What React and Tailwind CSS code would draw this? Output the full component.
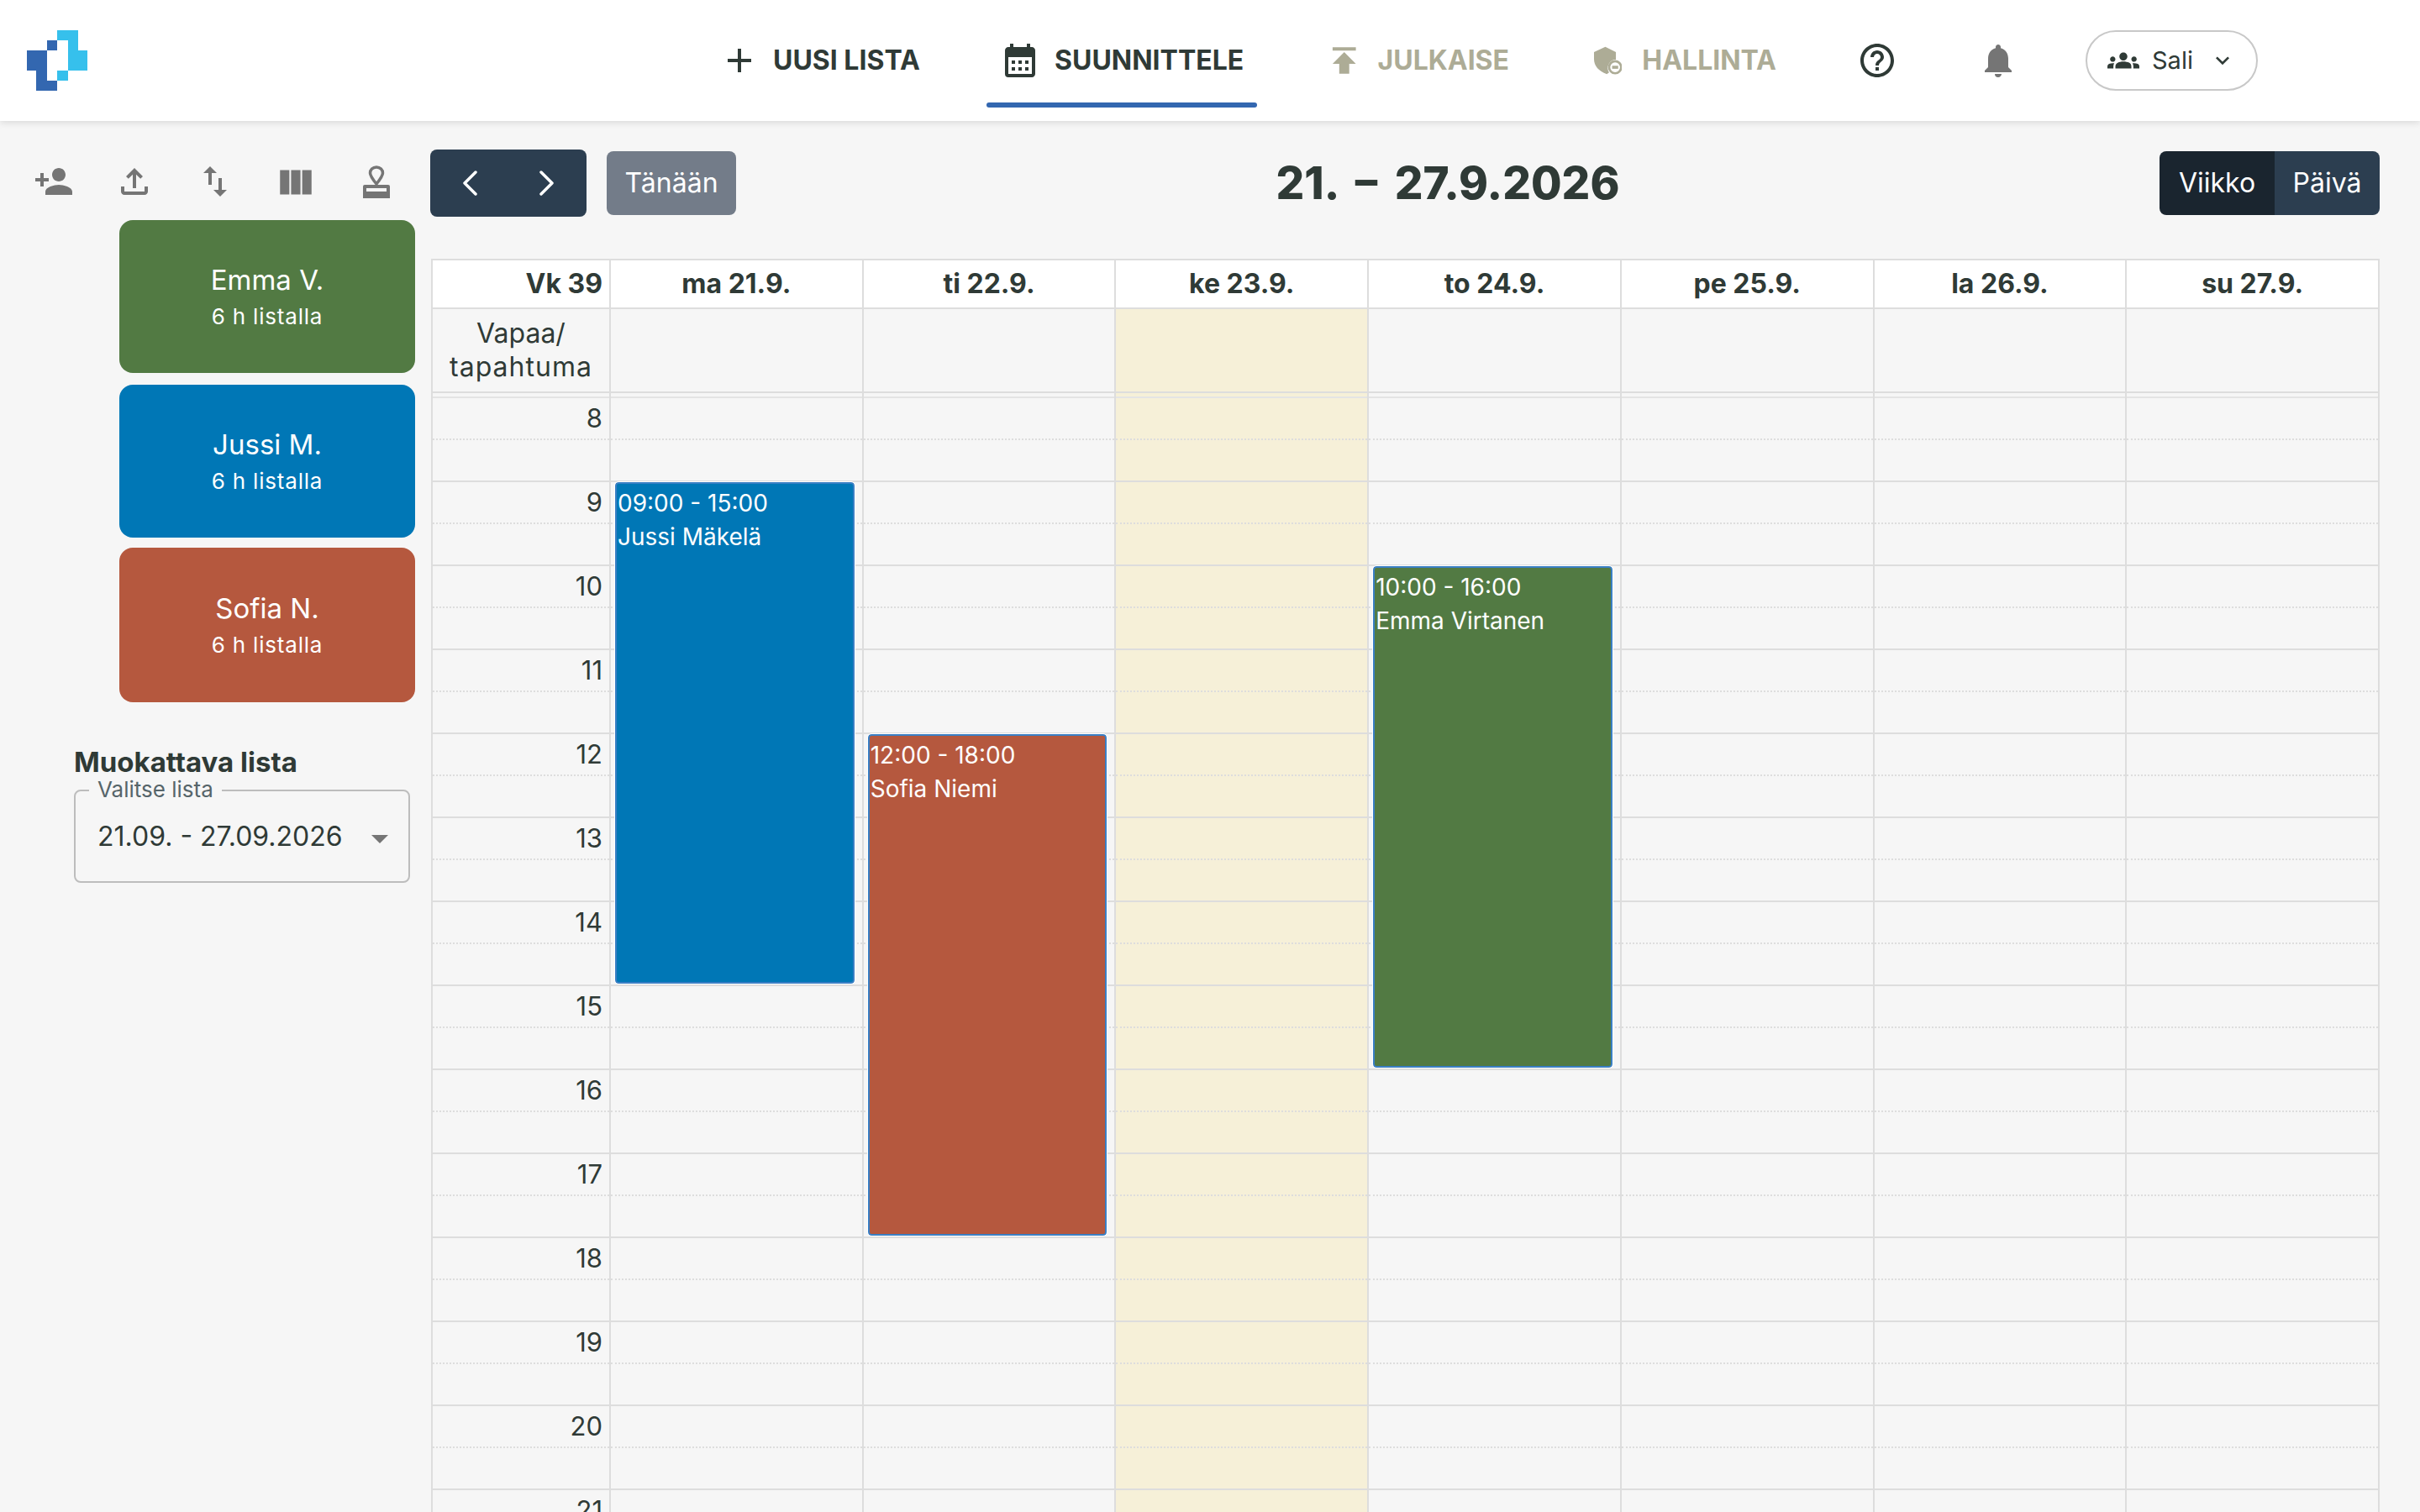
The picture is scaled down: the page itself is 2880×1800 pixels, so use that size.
import {
  MdAdd,
  MdArrowDropDown,
  MdCalendarMonth,
  MdGroups,
  MdHelpOutline,
  MdKeyboardArrowDown,
  MdNotifications,
  MdOutlineFileUpload,
  MdPersonAdd,
  MdPublish,
  MdSwapVert,
  MdViewColumn,
} from "react-icons/md";

const paivat = ["ma 21.9.", "ti 22.9.", "ke 23.9.", "to 24.9.", "pe 25.9.", "la 26.9.", "su 27.9."];
const tunnit = [8, 9, 10, 11, 12, 13, 14, 15, 16, 17, 18, 19, 20, 21];

function Logo() {
  return (
    <svg width="72" height="72" viewBox="0 0 72 72" className="block">
      <path fill="#3367b0" d="M24 12h12v12H24zM0 24h24v24H0zM11 48h13v12h12v12H11z" />
      <path fill="#36c0ec" d="M36 0h25v24h11v24H49V12H36zM36 48h13v12H36z" />
    </svg>
  );
}

function Leima() {
  return (
    <svg width="32" height="40" viewBox="0 0 32 40" fill="#757575">
      <path
        d="M16 3c-4.500 0-7.500 3.200-7.500 7 0 2.500 1.500 5.500 7.500 13 6-7.500 7.500-10.500 7.500-13 0-3.800-3-7-7.500-7z"
        fill="none"
        stroke="#757575"
        strokeWidth="3.500"
      />
      <path fillRule="evenodd" d="M2 24h28a2 2 0 0 1 2 2v14H0V26a2 2 0 0 1 2-2zM4 28v4h24v-4z" />
    </svg>
  );
}

function Kilpi() {
  return (
    <svg width="37" height="36" viewBox="0 0 37 36" fill="#adac96">
      <path d="M15 0 29 7v10a11 11 0 0 0-9 17l-3 2C6 32 0 25 0 16V7z" />
      <circle cx="28" cy="27" r="8" fill="none" stroke="#adac96" strokeWidth="3" />
      <rect x="24" y="25" width="8" height="4" />
    </svg>
  );
}

function Nuoli({ d }) {
  return (
    <svg width="18" height="30" viewBox="0 0 18 30" fill="none" stroke="#fff" strokeWidth="3.500" strokeLinecap="round" strokeLinejoin="round">
      <path d={d} />
    </svg>
  );
}

function Tapahtuma({ aika, nimi, vari }) {
  return (
    <div
      className={`absolute left-[5px] right-[9px] h-[597px] rounded-[4px] border-2 border-[#3a7fc4] outline outline-1 outline-white px-px pt-[3px] text-[28px] leading-[40px] text-white ${vari}`}
    >
      <div>{aika}</div>
      <div>{nimi}</div>
    </div>
  );
}

function Kortti({ nimi, vari }) {
  return (
    <div className={`rounded-[16px] flex flex-col items-center justify-center text-white ${vari}`}>
      <div className="text-[33px] leading-[44px]">{nimi}</div>
      <div className="text-[26px] leading-[36px] mt-[4px] tracking-[0.8px]">6 h listalla</div>
    </div>
  );
}

function Tuntirivit({ labels }) {
  return tunnit.map((t) => (
    <div key={t} className="h-[100px] shrink-0 border-b-2 border-[#ddd]">
      <div className="h-[50px] border-b-2 border-dotted border-[#ddd] pr-[8px] text-right text-[31px] leading-[48px]">
        {labels ? t : ""}
      </div>
    </div>
  ));
}

export default function App() {
  return (
    <div
      className="h-[1800px] overflow-hidden bg-[#f6f6f6] text-[#2f3a36]"
      style={{ fontFamily: "Inter, 'Open Sans', sans-serif" }}
    >
      <header className="relative z-10 flex h-36 items-center bg-white pl-8 shadow-[0_2px_8px_rgba(0,0,0,0.12)]">
        <Logo />
        <nav className="flex h-full items-center text-[32px] font-bold">
          <div className="ml-[752px] flex w-[239px] items-center gap-4">
            <MdAdd size={48} />
            <span>UUSI LISTA</span>
          </div>
          <div className="relative ml-[79px] flex h-full w-[322px] items-center gap-[17px] pl-4">
            <MdCalendarMonth size={48} />
            <span>SUUNNITTELE</span>
            <div className="absolute bottom-4 left-0 right-0 h-[6px] rounded-full bg-[#3367b0]" />
          </div>
          <div className="ml-[80px] flex w-[220px] items-center gap-4 text-[#adac96]">
            <MdPublish size={48} />
            <span>JULKAISE</span>
          </div>
          <div className="ml-[101px] flex w-[217px] items-center gap-[24px] text-[#adac96]">
            <Kilpi />
            <span>HALLINTA</span>
          </div>
        </nav>
        <MdHelpOutline size={48} className="ml-[96px]" />
        <MdNotifications size={48} color="#757575" className="ml-[96px]" />
        <div className="ml-[80px] flex h-[72px] w-[205px] items-center rounded-[36px] border-2 border-[#c8c8c8] pl-[24px] text-[29px]">
          <MdGroups size={38} />
          <span className="ml-[15px]">Sali</span>
          <MdKeyboardArrowDown size={32} className="ml-[19px]" />
        </div>
      </header>

      <div className="flex">
        <aside className="w-[512px] shrink-0">
          <div className="flex h-[118px] items-start pl-4 pt-[48px] text-[#757575]">
            <div className="flex w-24 justify-center"><MdPersonAdd size={48} /></div>
            <div className="flex w-24 justify-center"><MdOutlineFileUpload size={48} /></div>
            <div className="flex w-24 justify-center"><MdSwapVert size={48} /></div>
            <div className="flex w-24 justify-center"><MdViewColumn size={50} /></div>
            <div className="flex w-24 justify-center pt-1"><Leima /></div>
          </div>
          <div className="ml-[142px] mr-[18px] flex flex-col">
            <Kortti nimi="Emma V." vari="h-[182px] bg-[#527a43]" />
            <Kortti nimi="Jussi M." vari="mt-[14px] h-[182px] bg-[#0077b6]" />
            <Kortti nimi="Sofia N." vari="mt-[12px] h-[184px] bg-[#b5583e]" />
          </div>
          <div className="ml-[88px] mr-[24px] mt-[49px]">
            <h3 className="text-[33px] font-bold leading-[44px]">Muokattava lista</h3>
            <div className="relative mt-[11px] flex h-[111px] items-start justify-between rounded-[8px] border-2 border-[#bdbdbd] pl-[26px] pr-[10px] pt-[32px]">
              <span className="absolute -top-[18px] left-[16px] bg-[#f6f6f6] px-[10px] text-[26px] leading-[32px] text-[#56656a]">
                Valitse lista
              </span>
              <span className="text-[32px] leading-[44px]">21.09. - 27.09.2026</span>
              <MdArrowDropDown size={48} color="#757575" />
            </div>
          </div>
        </aside>

        <main className="w-[2320px]">
          <div className="flex h-[164px] items-start pt-[34px]">
            <div className="flex h-20 w-[186px] items-center justify-center gap-[74px] rounded-[8px] bg-[#2c3e50]">
              <Nuoli d="M16 2 3 15l13 13" />
              <Nuoli d="M2 2l13 13L2 28" />
            </div>
            <div className="ml-6 mt-[2px] flex h-[76px] w-[154px] items-center justify-center rounded-[8px] bg-[#737c89] text-[32px] text-white">
              Tänään
            </div>
            <h1 className="flex-1 text-center text-[53px] font-extrabold leading-[80px] [word-spacing:9px]">21. – 27.9.2026</h1>
            <div className="mt-[2px] flex h-[76px] overflow-hidden rounded-[8px] text-[32px] text-white">
              <div className="flex w-[137px] items-center justify-center bg-[#1a252f]">Viikko</div>
              <div className="flex w-[125px] items-center justify-center bg-[#2c3e50]">Päivä</div>
            </div>
          </div>

          <div className="ml-px flex w-[2319px] border-l-2 border-r-2 border-t-2 border-[#ddd]">
            <div className="w-[212px] shrink-0 border-r-2 border-[#ddd]">
              <div className="h-[58px] border-b-2 border-[#ddd] bg-white pr-[8px] text-right text-[32px] font-bold leading-[55px]">
                Vk 39
              </div>
              <div className="h-[100px] border-b-2 border-[#ddd] pt-[9px] text-center text-[32px] leading-[40px]">
                Vapaa/
                <br />
                <span className="tracking-[1px]">tapahtuma</span>
              </div>
              <div className="h-[6px] border-b-2 border-[#e4e4e4]" />
              <Tuntirivit labels />
            </div>
            {paivat.map((p, i) => (
              <div key={p} className={`flex-1 border-[#ddd] ${i < 6 ? "border-r-2" : ""} ${i === 2 ? "bg-[#f6f0d8]" : ""}`}>
                <div className="h-[58px] border-b-2 border-[#ddd] bg-white text-center text-[32px] font-bold leading-[55px]">
                  {p}
                </div>
                <div className="h-[100px] border-b-2 border-[#ddd]" />
                <div className="h-[6px] border-b-2 border-[#e4e4e4]" />
                <div className="relative">
                  <Tuntirivit />
                  {i === 0 && <Tapahtuma aika="09:00 - 15:00" nimi="Jussi Mäkelä" vari="top-[100px] bg-[#0077b6]" />}
                  {i === 1 && <Tapahtuma aika="12:00 - 18:00" nimi="Sofia Niemi" vari="top-[400px] bg-[#b5583e]" />}
                  {i === 3 && <Tapahtuma aika="10:00 - 16:00" nimi="Emma Virtanen" vari="top-[200px] bg-[#527a43]" />}
                </div>
              </div>
            ))}
          </div>
        </main>
      </div>
    </div>
  );
}
